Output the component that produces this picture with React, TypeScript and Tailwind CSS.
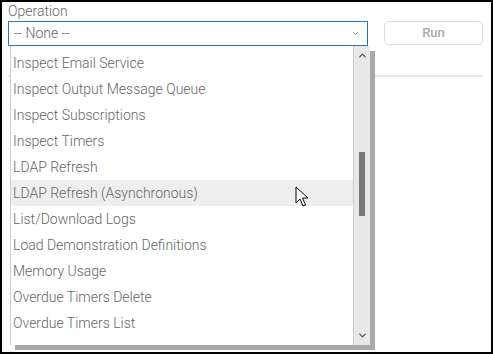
import { ChevronDown, ChevronUp } from "lucide-react";

const operations = [
  "Inspect Email Service",
  "Inspect Output Message Queue",
  "Inspect Subscriptions",
  "Inspect Timers",
  "LDAP Refresh",
  "LDAP Refresh (Asynchronous)",
  "List/Download Logs",
  "Load Demonstration Definitions",
  "Memory Usage",
  "Overdue Timers Delete",
  "Overdue Timers List",
];

function Cursor() {
  return (
    <svg width="14" height="22" viewBox="0 0 14 22" className="absolute left-[284px] top-[6px]">
      <path
        d="M1 1 L1 17 L5 13 L8 20 L10.5 19 L7.5 12 L13 12 Z"
        fill="#fff"
        stroke="#000"
        strokeWidth="1"
        strokeLinejoin="miter"
      />
    </svg>
  );
}

export default function App() {
  return (
    <div className="w-[493px] h-[354px] border-2 border-black bg-white relative overflow-hidden font-['Roboto',sans-serif] text-[#666]">
      <div className="pl-[6px] pr-[8px] pt-[1px]">
        <div className="text-[14px] leading-[17px] font-light text-[#666]">Operation</div>
        <div className="flex items-start gap-[16px] mt-[1px]">
          <div className="w-[360px] h-[25px] border border-[#2a77b5] flex items-center justify-between pl-[5px] pr-[7px]">
            <span className="text-[14px] font-light text-[#666]">-- None --</span>
            <ChevronDown size={9} strokeWidth={2.5} className="text-[#888]" />
          </div>
          <div className="w-[99px] h-[24px] border border-[#dcdcdc] rounded-[5px] flex items-center justify-center text-[13px] font-medium text-[#aaa]">
            Run
          </div>
        </div>
        <div className="mt-[29px] h-[2px] bg-[#e6e6e6]" />
      </div>

      <div className="absolute left-[8px] top-[44px] w-[360px] h-[299px] bg-white border-l border-[#cfcfcf] shadow-[5px_5px_0_#a9a9a9] flex">
        <div className="flex-1 pt-[4px]">
          {operations.map((op, i) => (
            <div
              key={op}
              className={
                "relative h-[26px] flex items-center pl-[2px] text-[14px] font-light text-[#666] " +
                (i === 5 ? "bg-[#eeeeee]" : "")
              }
            >
              {op}
              {i === 5 && <Cursor />}
            </div>
          ))}
        </div>
        <div className="w-[17px] bg-[#e8e8e8] border-l border-[#cfcfcf] flex flex-col items-center justify-between py-[4px]">
          <ChevronUp size={11} strokeWidth={3} className="text-[#555]" />
          <div className="flex-1 w-full flex justify-center">
            <div className="w-[6px] h-[64px] mt-[91px] bg-[#777]" />
          </div>
          <ChevronDown size={11} strokeWidth={3} className="text-[#555]" />
        </div>
      </div>
    </div>
  );
}
